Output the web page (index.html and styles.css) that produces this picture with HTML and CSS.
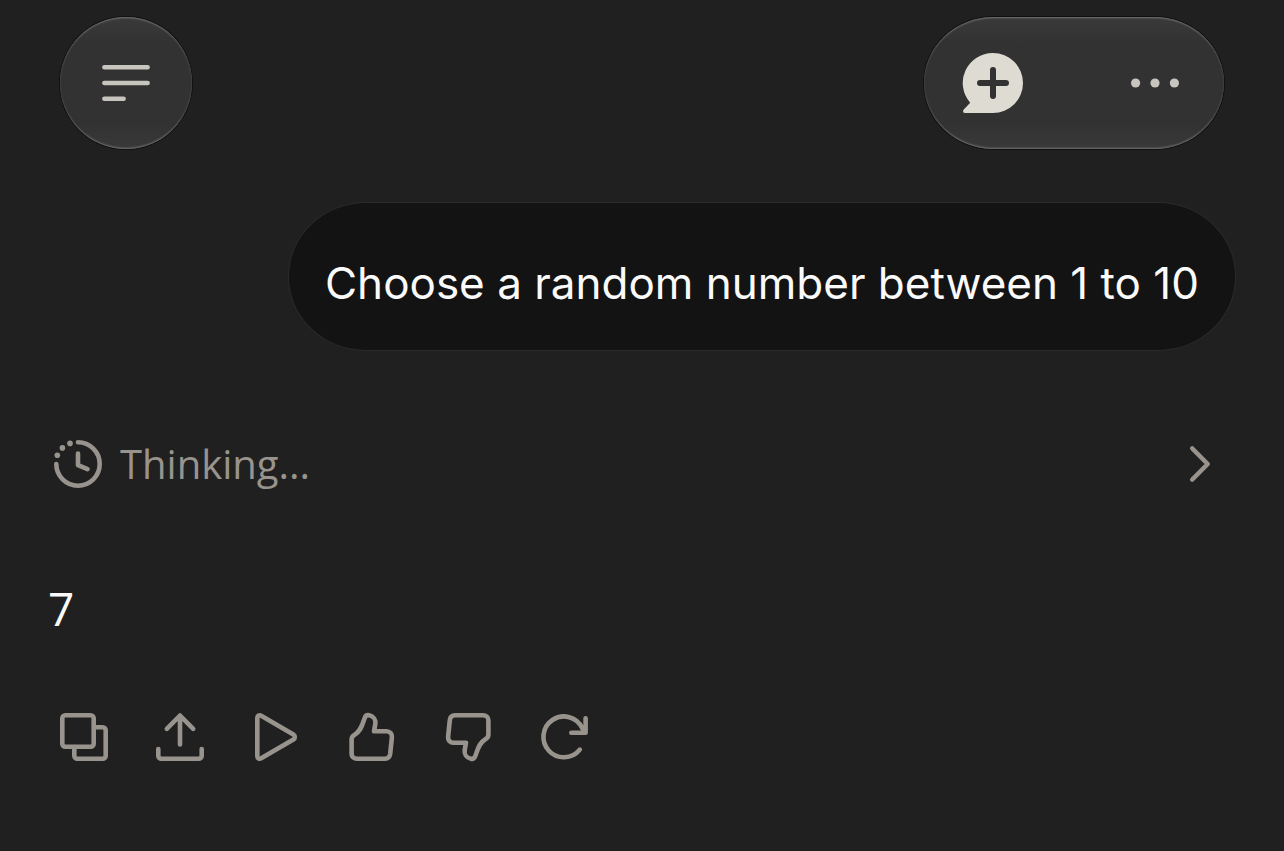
FILE: index.html
```html
<!DOCTYPE html>
<html lang="en">
<head>
    <meta charset="UTF-8">
    <meta name="viewport" content="width=device-width, initial-scale=1.0">
    <title>Chat</title>
    <link rel="stylesheet" href="styles.css">
</head>
<body>
    <header class="top-bar">
        <button class="glass menu-button" type="button" aria-label="Open menu">
            <svg width="48" height="48" viewBox="0 0 48 48" class="line-icon">
                <path d="M2.4 8.3H45.6M2.4 24H45.6M2.4 39.7H21.6"/>
            </svg>
        </button>
        <div class="glass top-actions">
            <button type="button" aria-label="New chat">
                <svg width="60" height="60" viewBox="0 0 60 60">
                    <path fill="#dddbd2" d="M30 0A30 30 0 0 1 30 60H1.8C0 60 -.4 58 .8 56.6L7.2 49.8A30 30 0 0 1 30 0Z"/>
                    <path fill="none" stroke="#323232" stroke-width="6" stroke-linecap="round" d="M30 17V43M17 30H43"/>
                </svg>
            </button>
            <button type="button" aria-label="More options">
                <svg width="48" height="48" viewBox="0 0 48 48" fill="#c8c5bf">
                    <circle cx="4.6" cy="24" r="4.6"/>
                    <circle cx="24" cy="24" r="4.6"/>
                    <circle cx="43.4" cy="24" r="4.6"/>
                </svg>
            </button>
        </div>
    </header>

    <main class="chat">
        <p class="user-message">Choose a random number between 1 to 10</p>

        <button class="thinking" type="button">
            <svg width="48" height="48" viewBox="0 0 48 48" class="line-icon">
                <path d="M24 2.3A21.7 21.7 0 1 1 2.3 24M24 13.5V25.2L33.5 29.2"/>
                <g fill="currentColor" stroke="none">
                    <circle cx="3.3" cy="15.3" r="2.8"/>
                    <circle cx="8.4" cy="7.9" r="2.8"/>
                    <circle cx="16" cy="3.4" r="2.8"/>
                </g>
            </svg>
            <span class="thinking-label">Thinking...</span>
            <svg width="24" height="40" viewBox="0 0 24 40" class="line-icon">
                <path d="M4.3 4.5L19.7 20L4.3 35.5"/>
            </svg>
        </button>

        <p class="answer">7</p>

        <div class="message-actions">
            <button type="button" aria-label="Copy">
                <svg width="48" height="48" viewBox="0 0 48 48" class="line-icon">
                    <rect x="2.3" y="2.3" width="31.4" height="31.4" rx="3"/>
                    <path d="M34 14.3H42.7A3 3 0 0 1 45.7 17.3V42.7A3 3 0 0 1 42.7 45.7H17.3A3 3 0 0 1 14.3 42.7V34"/>
                </svg>
            </button>
            <button type="button" aria-label="Share">
                <svg width="48" height="48" viewBox="0 0 48 48" class="line-icon">
                    <path d="M24 31.5V2.8M10.8 15.8L24 2.5L37.2 15.8M2.3 36V42.7A3 3 0 0 0 5.3 45.7H42.7A3 3 0 0 0 45.7 42.7V36"/>
                </svg>
            </button>
            <button type="button" aria-label="Play">
                <svg width="48" height="48" viewBox="0 0 48 48" class="line-icon">
                    <path d="M5.3 4.9C5.3 2.6 7.3 1.6 9.2 2.7L41.4 21.4C43.3 22.6 43.3 25.4 41.4 26.6L9.2 45.3C7.3 46.4 5.3 45.4 5.3 43.1Z"/>
                </svg>
            </button>
            <button type="button" aria-label="Good response">
                <svg width="48" height="48" viewBox="0 0 48 48" class="line-icon">
                    <path d="M3.6 26.5C3.6 24.5 4.5 23 6.3 22C11.5 19 13.5 14.5 15.8 7.5L16.8 4.8C17.5 2.8 19.3 1.9 21.2 2.3C25.5 3.2 28 7 27.3 11L26 18.3H38.5C42 18.3 44.3 21 43.9 24.3L42.2 40.8C41.8 43.8 39.9 45.7 37 45.7H9C5.8 45.7 3.6 43.8 3.6 40.8Z"/>
                </svg>
            </button>
            <button type="button" aria-label="Bad response">
                <svg width="48" height="48" viewBox="0 0 48 48" class="line-icon">
                    <path transform="rotate(180 24 24)" d="M3.6 26.5C3.6 24.5 4.5 23 6.3 22C11.5 19 13.5 14.5 15.8 7.5L16.8 4.8C17.5 2.8 19.3 1.9 21.2 2.3C25.5 3.2 28 7 27.3 11L26 18.3H38.5C42 18.3 44.3 21 43.9 24.3L42.2 40.8C41.8 43.8 39.9 45.7 37 45.7H9C5.8 45.7 3.6 43.8 3.6 40.8Z"/>
                </svg>
            </button>
            <button type="button" aria-label="Retry">
                <svg width="48" height="48" viewBox="0 0 48 48" class="line-icon">
                    <path d="M39.8 36.6A20.4 20.4 0 1 1 42.3 15.2L45 19.6M45.6 5.2V19.7H31.3"/>
                </svg>
            </button>
        </div>
    </main>
</body>
</html>
```
FILE: styles.css
```css
* {
    box-sizing: border-box;
}
body {
    margin: 0;
    background-color: #202020;
    color: #fafafa;
    font-family: Inter, "Liberation Sans", sans-serif;
}
button {
    display: flex;
    align-items: center;
    justify-content: center;
    padding: 0;
    border: none;
    background: none;
    color: #98948d;
    font: inherit;
    cursor: pointer;
}
svg {
    display: block;
    flex: none;
    overflow: visible;
}
.line-icon {
    fill: none;
    stroke: currentColor;
    stroke-width: 4.6;
    stroke-linecap: round;
    stroke-linejoin: round;
}
.top-bar {
    display: flex;
    justify-content: space-between;
    padding: 17px 60px 0;
}
.glass {
    height: 132px;
    background: linear-gradient(#3a3a3a, #323232 20%, #323232 80%, #393939);
    box-shadow: inset 0 2px 2px -1px #737373, inset 0 -2px 2px -1px #737373, inset 0 0 3px #404040, 0 0 0 1px #101010;
}
.menu-button {
    width: 132px;
    border-radius: 50%;
    color: #c8c5bf;
}
.top-actions {
    display: flex;
    justify-content: space-between;
    width: 300px;
    border-radius: 70px / 66px;
}
.top-actions button {
    width: 138px;
}
.chat {
    display: flex;
    flex-direction: column;
    padding: 53px 48px 0;
}
.user-message {
    align-self: flex-end;
    margin: 0;
    padding: 50px 36px 37px;
    border: 1px solid #2b2b2b;
    border-radius: 78px / 74px;
    background-color: #131313;
    font-size: 44px;
    line-height: 60px;
}
.thinking {
    gap: 18px;
    margin-top: 83px;
    padding: 0 24px 0 6px;
}
.thinking-label {
    flex: 1;
    font-family: "Open Sans", sans-serif;
    font-size: 40px;
    line-height: 60px;
    text-align: left;
}
.answer {
    margin: 84px 0 0;
    font-family: "Open Sans", sans-serif;
    font-size: 46px;
    line-height: 60px;
}
.message-actions {
    display: flex;
    margin: 51px 0 0 -12px;
}
.message-actions button {
    width: 96px;
    height: 96px;
}
```
